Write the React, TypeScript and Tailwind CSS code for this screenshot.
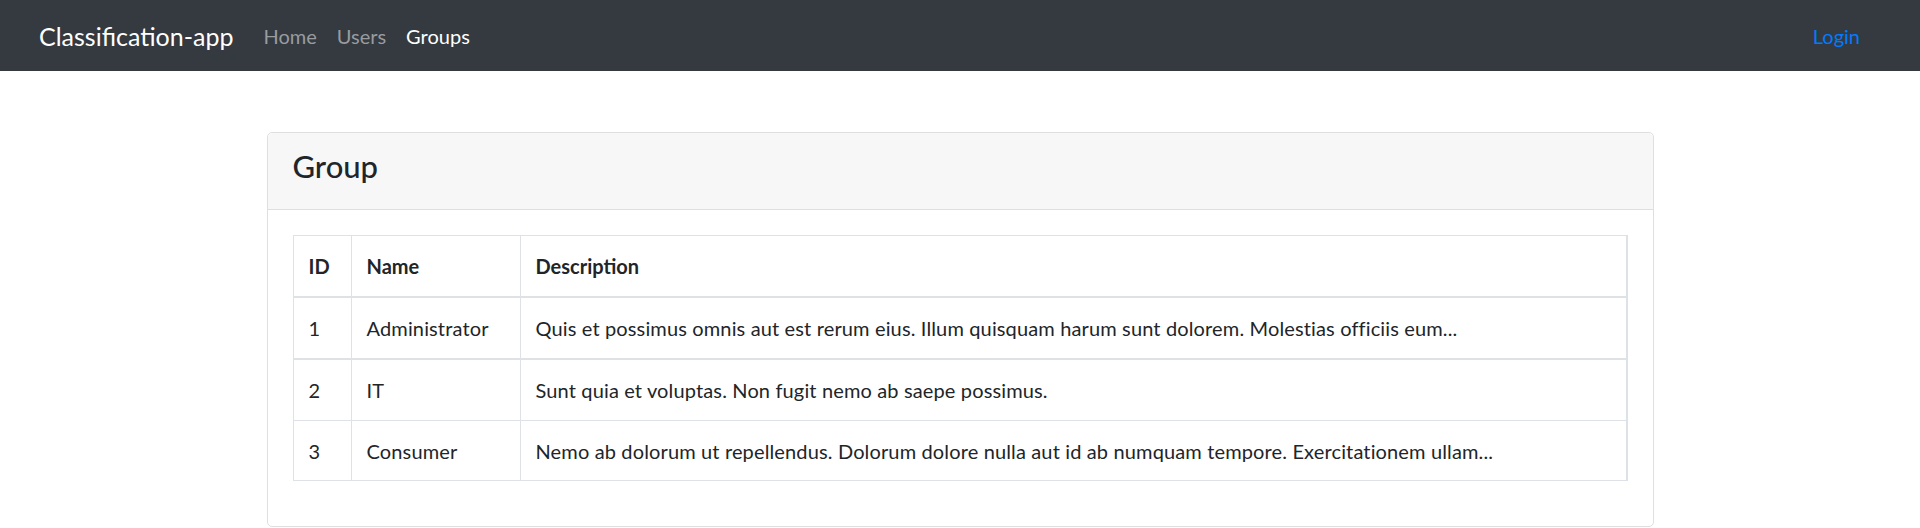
interface Group {
  id: number;
  name: string;
  description: string;
}

const groups: Group[] = [
  {
    id: 1,
    name: "Administrator",
    description:
      "Quis et possimus omnis aut est rerum eius. Illum quisquam harum sunt dolorem. Molestias officiis eum...",
  },
  {
    id: 2,
    name: "IT",
    description: "Sunt quia et voluptas. Non fugit nemo ab saepe possimus.",
  },
  {
    id: 3,
    name: "Consumer",
    description:
      "Nemo ab dolorum ut repellendus. Dolorum dolore nulla aut id ab numquam tempore. Exercitationem ullam...",
  },
];

function Navbar() {
  return (
    <nav className="flex h-[71px] items-center bg-[#343a40] pl-[39px] pr-[50px]">
      <a className="mr-[20px] text-[25px] leading-[38px] text-white" href="#">
        Classification-app
      </a>
      <ul className="flex text-[20px] leading-[30px]">
        <li>
          <a className="px-[10px] text-[#999c9f]" href="#">
            Home
          </a>
        </li>
        <li>
          <a className="px-[10px] text-[#999c9f]" href="#">
            Users
          </a>
        </li>
        <li>
          <a className="px-[10px] text-white" href="#">
            Groups
          </a>
        </li>
      </ul>
      <a className="ml-auto px-[10px] text-[20px] leading-[30px] text-[#007bff]" href="#">
        Login
      </a>
    </nav>
  );
}

export default function App() {
  const cell = "border border-[#dee2e6] px-[15px] align-middle";

  return (
    <div className="min-h-[528px] bg-white font-['Lato','Liberation_Sans',sans-serif] text-[20px] text-[#212529]">
      <Navbar />
      <div className="mx-auto mt-[61px] w-[1387px] rounded-[5px] border border-[#dfdfdf]">
        <div className="rounded-t-[5px] border-b border-[#dfdfdf] bg-[#f7f7f7] px-[25px] pt-[15px] pb-[25px]">
          <h4 className="text-[31px] font-medium leading-[36px]">Group</h4>
        </div>
        <div className="px-[25px] pt-[25px] pb-[45px]">
          <table className="w-full border-collapse border-r-2 border-[#dee2e6] text-left">
            <thead>
              <tr className="h-[61px]">
                <th className={`${cell} w-[58px] border-b-2 font-bold`}>ID</th>
                <th className={`${cell} w-[169px] border-b-2 font-bold`}>Name</th>
                <th className={`${cell} border-b-2 font-bold`}>Description</th>
              </tr>
            </thead>
            <tbody className="tracking-[0.14px]">
              {groups.map((group, index) => (
                <tr
                  key={group.id}
                  className={
                    index === 0
                      ? "h-[62px] border-b-2 border-[#dee2e6]"
                      : index === groups.length - 1
                        ? "h-[60px]"
                        : "h-[62px]"
                  }
                >
                  <td className={cell}>{group.id}</td>
                  <td className={cell}>{group.name}</td>
                  <td className={cell}>{group.description}</td>
                </tr>
              ))}
            </tbody>
          </table>
        </div>
      </div>
    </div>
  );
}
